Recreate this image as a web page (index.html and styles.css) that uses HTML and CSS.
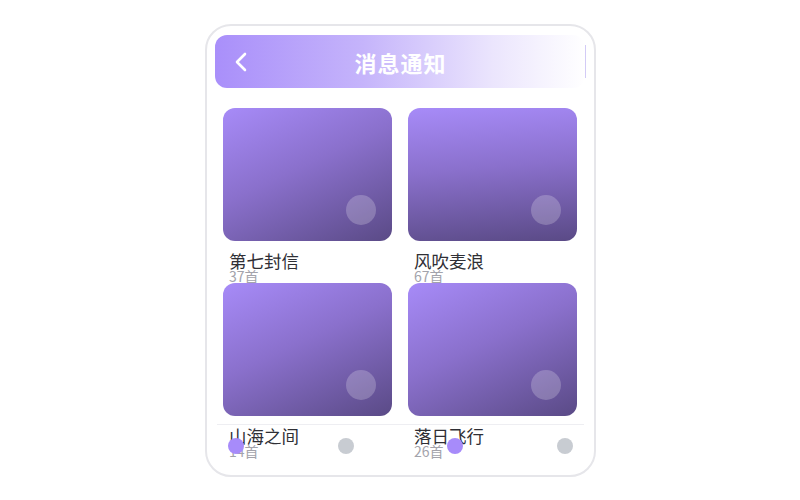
FILE: index.html
```html
<!DOCTYPE html>
<html lang="zh">
<head>
<meta charset="utf-8">
<link rel="stylesheet" href="styles.css">
</head>
<body>
<div class="phone">
  <div class="header">
    <svg class="back" width="14" height="20" viewBox="0 0 14 20"><path d="M11 2 L3 10 L11 18" fill="none" stroke="#fff" stroke-width="2.6" stroke-linecap="round" stroke-linejoin="round"/></svg>
    <div class="title">消息通知</div>
    <span class="edge"></span>
  </div>
  <div class="grid">
    <div class="item">
      <div class="cover diag"><span class="knob"></span></div>
      <div class="name">第七封信</div>
      <div class="count">37首</div>
    </div>
    <div class="item">
      <div class="cover vert"><span class="knob"></span></div>
      <div class="name">风吹麦浪</div>
      <div class="count">67首</div>
    </div>
    <div class="item">
      <div class="cover diag"><span class="knob"></span></div>
      <div class="name">山海之间</div>
      <div class="count">14首</div>
    </div>
    <div class="item">
      <div class="cover diag"><span class="knob"></span></div>
      <div class="name">落日飞行</div>
      <div class="count">26首</div>
    </div>
  </div>
  <div class="nav">
    <span class="dot on"></span>
    <span class="dot"></span>
    <span class="dot on"></span>
    <span class="dot"></span>
  </div>
</div>
</body>
</html>
```
FILE: styles.css
```css
html, body {
  margin: 0;
  padding: 0;
  background: #fff;
}
body {
  font-family: "Noto Sans CJK SC", "Noto Sans", sans-serif;
  width: 800px;
  height: 500px;
  position: relative;
}
.phone {
  position: absolute;
  left: 205px;
  top: 24px;
  width: 387px;
  height: 449px;
  border: 2px solid #e6e6ea;
  border-radius: 26px;
  overflow: hidden;
}
.header {
  position: relative;
  margin: 9px 9px 0 8px;
  height: 53px;
  border-radius: 12px;
  background: linear-gradient(90deg, #a98ffa 0%, #c5b4fb 40%, #ebe5fd 75%, #ffffff 100%);
  display: flex;
  align-items: center;
  justify-content: center;
}
.back {
  position: absolute;
  left: 19px;
  top: 17px;
}
.title {
  color: #fff;
  font-size: 22px;
  font-weight: 700;
  letter-spacing: 1px;
  padding-left: 1px;
}
.edge {
  position: absolute;
  right: -1px;
  top: 10px;
  bottom: 10px;
  width: 1px;
  background: #d3cbf6;
}
.grid {
  margin: 20px 17px 0 16px;
  display: grid;
  grid-template-columns: 169px 169px;
  grid-auto-rows: 175px;
  column-gap: 16px;
}
.item {
  display: flex;
  flex-direction: column;
}
.cover {
  position: relative;
  height: 133px;
  border-radius: 12px;
  flex: none;
}
.diag {
  background: linear-gradient(155deg, #a78bf8 0%, #8a70cc 45%, #5a4a86 100%);
}
.vert {
  background: linear-gradient(175deg, #a78bf8 0%, #8a70cc 45%, #5a4a86 100%);
}
.knob {
  position: absolute;
  right: 16px;
  bottom: 16px;
  width: 30px;
  height: 30px;
  border-radius: 50%;
  background: rgba(255, 255, 255, 0.22);
}
.name {
  margin: 9px 0 0 6px;
  font-size: 17.5px;
  line-height: 21px;
  color: #2f2f35;
}
.count {
  margin-left: 6px;
  margin-top: -2px;
  font-size: 14px;
  line-height: 14px;
  color: #a3a3ab;
}
.nav {
  position: absolute;
  left: 10px;
  right: 10px;
  top: 398px;
  height: 42px;
  border-top: 1px solid #eeeef2;
  display: flex;
  justify-content: space-between;
  align-items: center;
  padding: 0 11px;
}
.dot {
  width: 16px;
  height: 16px;
  border-radius: 50%;
  background: #c8ccd2;
}
.dot.on {
  background: #a78bfa;
}
```
